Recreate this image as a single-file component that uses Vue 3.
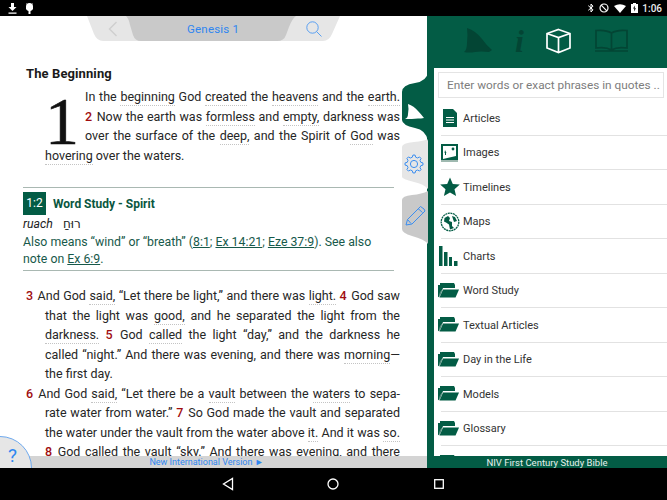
<script setup>
const parse = (s) =>
  s.split(/(\[[^\]]+\]|\{[^}]+\})/).filter(Boolean).map((p) => {
    if (p[0] === '[') return { t: p.slice(1, -1), c: 'w' }
    if (p[0] === '{') return { t: p.slice(1, -1), c: 'v' }
    return { t: p, c: '' }
  })
const intro = [
  'In the [beginning] God [created] the [heavens] and the [earth.]',
  '{2} Now the earth was [formless] and [empty,] darkness was',
  'over the surface of the [deep,] and the Spirit of [God] was',
].map(parse)
const body = [
  { s: '{3} And God [said,] “Let there be light,” and there was [light.] {4} God saw', first: true },
  { s: 'that the light was [good,] and he separated the light from the' },
  { s: '[darkness.] {5} God [called] the light “day,” and the darkness he' },
  { s: 'called “night.” And there was evening, and there was [morning]—' },
  { s: 'the first day.', last: true },
  { s: '{6} And God [said,] “Let there be a [vault] between the [waters] to sepa-', first: true },
  { s: 'rate water from water.” {7} So God made the vault and separated' },
  { s: 'the water under the vault from the water above [it.] And it was [so.]' },
  { s: '{8} God called the vault “sky.” And there was evening, and there' },
].map((l) => ({ ...l, parts: parse(l.s) }))
const rows = [
  ['Articles', 'doc'], ['Images', 'img'], ['Timelines', 'star'], ['Maps', 'globe'], ['Charts', 'bars'],
  ['Word Study', 'folder'], ['Textual Articles', 'folder'], ['Day in the Life', 'folder'],
  ['Models', 'folder'], ['Glossary', 'folder'], ['', 'folder'],
].map(([label, icon]) => ({ label, icon }))

const gearPath = (() => {
  const cx = 13, cy = 96, n = 8, R = 9, r = 7
  const pts = []
  for (let i = 0; i < n; i++) {
    const a = (i / n) * Math.PI * 2
    const s = Math.PI / n
    for (const [d, rad] of [[-0.62, r], [-0.3, R], [0.3, R], [0.62, r]]) {
      const t = a + d * s
      pts.push(`${(cx + Math.cos(t) * rad).toFixed(2)} ${(cy + Math.sin(t) * rad).toFixed(2)}`)
    }
  }
  return 'M' + pts.join('L') + 'Z'
})()
</script>

<template>
  <div class="screen">
    <header class="status">
      <svg class="st-left" width="40" height="16" viewBox="0 0 40 16" fill="#fff">
        <path d="M11 3h3v4h2.500l-4 4-4-4H11zM8.500 12.500h8v1.300h-8z" />
        <path d="M26 6.500a3.500 3.500 0 0 1 7 0v2.500a3.500 3.500 0 0 1-2.500 2v3h-2v-3a3.500 3.500 0 0 1-2.500-2z" />
        <path d="M26.500 3.500l1.500 2M32.500 3.500l-1.500 2" stroke="#fff" stroke-width=".8" />
      </svg>
      <div class="st-right">
        <svg width="6" height="10" viewBox="0 0 6 10" fill="none" stroke="#fff" stroke-width="1"><path d="M.3 2.700L5 6.800 3 9V1l2 2.200L.3 7.300" /></svg>
        <svg width="10" height="10" viewBox="0 0 10 10" fill="none" stroke="#fff" stroke-width="1.200"><circle cx="5" cy="5" r="4" /><path d="M2.200 2.200l5.600 5.600" /></svg>
        <svg width="12" height="9" viewBox="0 0 12 9" fill="#fff"><path d="M0 2Q6-1.600 12 2L6 9z" /></svg>
        <svg width="7" height="10" viewBox="0 0 7 10"><path fill="#fff" d="M0 1h2V0h3v1h2v9H0z" /><path fill="#000" d="M4 2.500L2 5.500h1.300L3 8.500l2-3.200H3.700z" /></svg>
        <span class="clock">1:06</span>
      </div>
    </header>

    <main class="main">
      <section class="reader">
        <div class="pill">
          <svg class="pill-bg" width="253" height="25" viewBox="0 0 253 25">
            <path fill="#e6e6e6" d="M0 0h253l-8 18q-3 7-9 7H16q-6 0-9-7z" />
            <path fill="#c9c9c9" d="M39 0h170q-4 3-7 11l-3 8q-2 6-9 6H54q-6 0-8-6l-3-10q-1-6-4-9z" />
          </svg>
          <svg class="pill-back" width="10" height="16" viewBox="0 0 10 16" fill="none" stroke="#cfcfcf" stroke-width="1.400"><path d="M8.500 1L1.500 8l7 7" /></svg>
          <span class="pill-title">Genesis 1</span>
          <svg class="pill-search" width="16" height="16" viewBox="0 0 16 16" fill="none" stroke="#4a97f2" stroke-width=".9"><circle cx="6.500" cy="6.500" r="5.700" /><path d="M10.700 10.700l4.800 4.800" /></svg>
        </div>

        <div class="scroll">
          <h2 class="heading">The Beginning</h2>
          <div class="intro">
            <span class="dropcap">1</span>
            <div class="intro-lines">
              <p v-for="(l, i) in intro" :key="i" class="line"><template v-for="(p, j) in l" :key="j"><span :class="p.c">{{ p.t }}</span></template></p>
            </div>
          </div>
          <p class="line left hover"><span class="w">hovering</span> over the waters.</p>

          <aside class="study">
            <div class="study-head"><span class="badge">1:2</span><strong>Word Study - Spirit</strong></div>
            <p class="ruach"><em>ruach</em><span class="heb" dir="rtl">רוּחַ</span></p>
            <p class="note">Also means “wind” or “breath” (<u>8:1</u>; <u>Ex 14:21</u>; <u>Eze 37:9</u>). See also</p>
            <p class="note">note on <u>Ex 6:9</u>.</p>
          </aside>

          <div class="verses">
            <p v-for="(l, i) in body" :key="i" class="line" :class="{ first: l.first, left: l.last }"><template v-for="(p, j) in l.parts" :key="j"><span :class="p.c">{{ p.t }}</span></template></p>
          </div>
        </div>

        <footer class="version">New International Version ►</footer>
        <div class="help">?</div>
      </section>

      <nav class="tabs">
        <svg width="27" height="177" viewBox="0 0 27 177">
          <path fill="#c9c9c9" d="M27 123q-6 3-16 4-10 1-10 5v29q0 4 10 7 12 3 16 8z" />
          <path fill="#e6e6e6" d="M27 71q-4 2-14 3-12 1-12 5v30q0 2 12 5 10 2 14 7z" />
          <path fill="#035c45" d="M27 4q-1 9-13 11Q1 17 1 24v28q0 5 13 8 11 2 13 13z" />
          <path fill="#fff" d="M7 36q6 2 10 7 3 3 6 7-3 .5-6 .5-6 .5-13 .500 3-1 3-5 1-5 0-10z" />
          <g fill="none" stroke="#3b8ef0" stroke-width="1">
            <circle cx="13" cy="96" r="3.600" />
            <path :d="gearPath" />
            <path d="M5 157l1.500-5.500 13-13 3.500 2.500 1 2-13 13zM6.500 151.500l3.500 4M17 140.500l4.500 4" />
          </g>
        </svg>
      </nav>

      <aside class="panel">
        <div class="panel-top">
          <svg width="29" height="26" viewBox="0 0 29 26" fill="#034534"><path d="M0 24q3-2 3-9 1-8 0-15 9 3 15 11 5 7 10 11l-3 2q-8-1-14 0-6 1-11 0z" /></svg>
          <span class="info">i</span>
          <svg width="25" height="26" viewBox="0 0 25 26" fill="none" stroke="#fff" stroke-width="1.700"><path d="M12.500 1.500L24 5.500v14.500L12.500 24.500 1 20V5.500zM1 5.500L12.500 9.500 24 5.500M12.500 9.500v15" /></svg>
          <svg width="35" height="23" viewBox="0 0 35 23" fill="none" stroke="#034534" stroke-width="1.700"><path d="M17.500 4Q12 .5 2 1.500v17.500q10-1.500 15.500 2 5.500-3.500 15.500-2V1.500Q23 .5 17.500 4zM17.500 4v17M1 22h33" /></svg>
        </div>
        <div class="panel-body">
          <div class="search">Enter words or exact phrases in quotes ..</div>
          <ul class="list">
            <li v-for="(r, i) in rows" :key="i" class="row">
              <svg v-if="r.icon === 'doc'" class="ico" width="20" height="20" viewBox="0 0 20 20"><path fill="#035c45" d="M3 1h10l4 4v14H3z" /><path fill="#fff" d="M6 9h8v1H6zM6 11.500h8v1H6zM6 14h8v1H6z" /></svg>
              <svg v-else-if="r.icon === 'img'" class="ico" width="20" height="20" viewBox="0 0 20 20"><path fill="#035c45" d="M1 1h17v18H1z" /><path fill="#fff" d="M3 3h13v10l-13 3z" /><circle cx="13" cy="6" r="1.400" fill="#035c45" /><path fill="#035c45" d="M5 7l1.500 3H6v2H5v-2h-.5z" /><path fill="#9fb9b0" d="M1 17h17v2H1z" /></svg>
              <svg v-else-if="r.icon === 'star'" class="ico" width="20" height="20" viewBox="0 0 20 20"><path fill="#035c45" d="M10 .5l2.800 6.500 7 .6-5.300 4.600 1.600 6.900-6.100-3.700-6.100 3.700 1.600-6.900L.2 7.600l7-.6z" /></svg>
              <svg v-else-if="r.icon === 'globe'" class="ico" width="20" height="20" viewBox="0 0 20 20"><circle cx="10" cy="10" r="8.800" fill="#fff" stroke="#035c45" stroke-width="1.300" stroke-dasharray="2 .6" /><path fill="#035c45" d="M4.500 6l3.500-2 2 2-1 3 3 1v4l2 2-4 1.500-1-5-3-2-2-1zM12 4l3 1 2 4-3 1z" /></svg>
              <svg v-else-if="r.icon === 'bars'" class="ico bars" width="20" height="20" viewBox="0 0 20 20"><path fill="#035c45" d="M0 0h3.500v20H0zM5 6h3.500v14H5zM10 11h3v9h-3zM15 15h3.500v5H15z" /></svg>
              <svg v-else class="ico folder" width="21" height="15" viewBox="0 0 21 15"><path fill="#035c45" d="M0 2h2V0h14l1 2v3H5L2 13 1 14h-1z" /><path fill="#035c45" d="M5 6.500h16l-3.500 8H1.500z" /><path stroke="#9fb9b0" stroke-width=".7" d="M1 14.500q1-6 3.500-8" fill="none" /></svg>
              <span class="label">{{ r.label }}</span>
            </li>
          </ul>
        </div>
        <footer class="panel-foot">NIV First Century Study Bible</footer>
      </aside>
    </main>

    <footer class="nav">
      <svg class="n1" width="12" height="14" viewBox="0 0 12 14" fill="none" stroke="#fff" stroke-width="1.300"><path d="M10.500 1.500v11L1.500 7z" /></svg>
      <svg class="n2" width="12" height="12" viewBox="0 0 12 12" fill="none" stroke="#fff" stroke-width="1.300"><circle cx="6" cy="6" r="5" /></svg>
      <svg class="n3" width="10" height="10" viewBox="0 0 10 10" fill="none" stroke="#fff" stroke-width="1.300"><rect x=".7" y=".7" width="8.600" height="8.600" /></svg>
    </footer>
  </div>
</template>

<style scoped>
.screen { width: 667px; height: 500px; display: flex; flex-direction: column; overflow: hidden; background: #000; font-family: Roboto, "Noto Sans", sans-serif; }
.status { height: 16px; flex: none; display: flex; justify-content: space-between; align-items: center; padding: 0 5px 0 0; color: #fff; }
.st-left { display: block; }
.st-right { display: flex; align-items: center; gap: 5px; }
.clock { font-size: 10px; font-weight: 500; color: #eee; margin-left: -1px; }

.main { height: 452px; flex: none; display: flex; position: relative; background: #fff; }
.reader { width: 427px; flex: none; position: relative; overflow: hidden; background: #fff; }
.pill { position: absolute; left: 87px; top: 0; width: 253px; height: 25px; display: flex; }
.pill-bg { position: absolute; inset: 0; }
.pill-back { position: absolute; left: 21px; top: 5px; }
.pill-title { position: absolute; left: 100px; top: 6px; font-size: 11.500px; letter-spacing: .2px; line-height: 15px; color: #2f86f0; }
.pill-search { position: absolute; left: 219px; top: 5px; }

.scroll { padding: 50px 27px 0 26px; height: 440px; overflow: hidden; box-sizing: border-box; }
.heading { margin: 0; font-size: 13px; line-height: 16px; font-weight: 700; color: #1a1a1a; letter-spacing: .1px; }
.intro { display: flex; padding-left: 19px; margin-top: 5px; height: 58.500px; }
.dropcap { width: 40px; flex: none; font-family: "Liberation Serif", serif; font-size: 68px; line-height: 69px; color: #111; -webkit-text-stroke: .6px #111; }
.intro-lines { flex: 1; }
.line { margin: 0; font-size: 12.500px; line-height: 19.500px; height: 19.500px; color: #262626; text-align: justify; text-align-last: justify; padding-left: 19px; }
.intro .line { padding-left: 0; }
.line.left { text-align-last: left; }
.line.first { padding-left: 0; }
.w { border-bottom: 1px dotted #c4c4c4; padding-bottom: 1px; }
.v { color: #a00d10; font-weight: 500; margin-right: 1px; }

.study { margin: 22px 6px 0 -3px; border-top: 1px solid #a9b8b2; border-bottom: 1px solid #a9b8b2; height: 84px; box-sizing: border-box; padding-top: 4px; color: #0d4f3c; }
.study-head { display: flex; align-items: center; gap: 7px; height: 23px; font-size: 12px; }
.study-head strong { font-weight: 700; color: #0a5640; }
.badge { width: 23px; height: 23px; background: #035c45; color: #fff; font-size: 12px; line-height: 23px; text-align: center; }
.ruach { margin: 0; height: 19px; line-height: 18px; font-size: 12.300px; color: #222; display: flex; gap: 10px; }
.heb { font-family: "DejaVu Sans", sans-serif; font-size: 12px; }
.note { margin: 0; font-size: 12.300px; line-height: 17px; height: 17px; color: #17594a; }
.verses { margin-top: 15px; }

.version { position: absolute; left: 0; right: 0; bottom: 0; height: 12px; background: #d4d4d4; text-align: center; font-size: 9px; line-height: 13px; color: #2f86f0; padding-right: 14px; box-sizing: border-box; }
.help { position: absolute; left: -32px; bottom: -32px; width: 64px; height: 64px; border-radius: 50%; box-sizing: border-box; border: 1px solid #6ea9ee; background: #e6e6e6; color: #2f86f0; font-size: 19px; padding: 8px 0 0 39px; line-height: 22px; }

.tabs { position: absolute; left: 401px; top: 52px; width: 27px; height: 177px; }
.tabs svg { display: block; }

.panel { flex: 1; display: flex; flex-direction: column; background: #035c45; padding-left: 7px; }
.panel-top { height: 52px; flex: none; display: flex; align-items: center; margin-left: -7px; padding: 0 0 3px 37px; box-sizing: border-box; }
.panel-top svg:nth-of-type(1) { margin-right: 22px; }
.panel-top svg:nth-of-type(2) { margin: 0 23px 0 22px; }
.info { font-family: "Liberation Serif", serif; font-style: italic; font-weight: 700; font-size: 32px; line-height: 30px; color: #034534; }
.panel-body { flex: 1; min-height: 0; background: #fff; overflow: hidden; }
.search { margin: 4px 3px 0 4px; height: 26px; border: 1px solid #e4e4e4; box-sizing: border-box; font-size: 11.800px; line-height: 24px; padding-left: 8px; color: #7d7d7d; white-space: nowrap; overflow: hidden; }
.list { list-style: none; margin: 3px 0 0; padding: 0; }
.row { height: 34.500px; display: flex; align-items: center; position: relative; box-sizing: border-box; padding-left: 29px; }
.row::after { content: ""; position: absolute; left: 7px; right: 0; bottom: 0; border-bottom: 1px solid #e2e2e2; }
.ico { position: absolute; left: 6px; top: 7px; }
.bars { left: 5px; }
.folder { left: 4px; top: 9px; }
.label { font-size: 11px; color: #333; }
.panel-foot { height: 12px; flex: none; margin-left: -7px; text-align: center; font-size: 9.500px; line-height: 13px; color: #e8f0ed; }

.nav { flex: 1; position: relative; background: #000; }
.nav svg { position: absolute; top: 50%; transform: translateY(-50%); }
.n1 { left: 222px; }
.n2 { left: 327px; }
.n3 { left: 434px; }
</style>
